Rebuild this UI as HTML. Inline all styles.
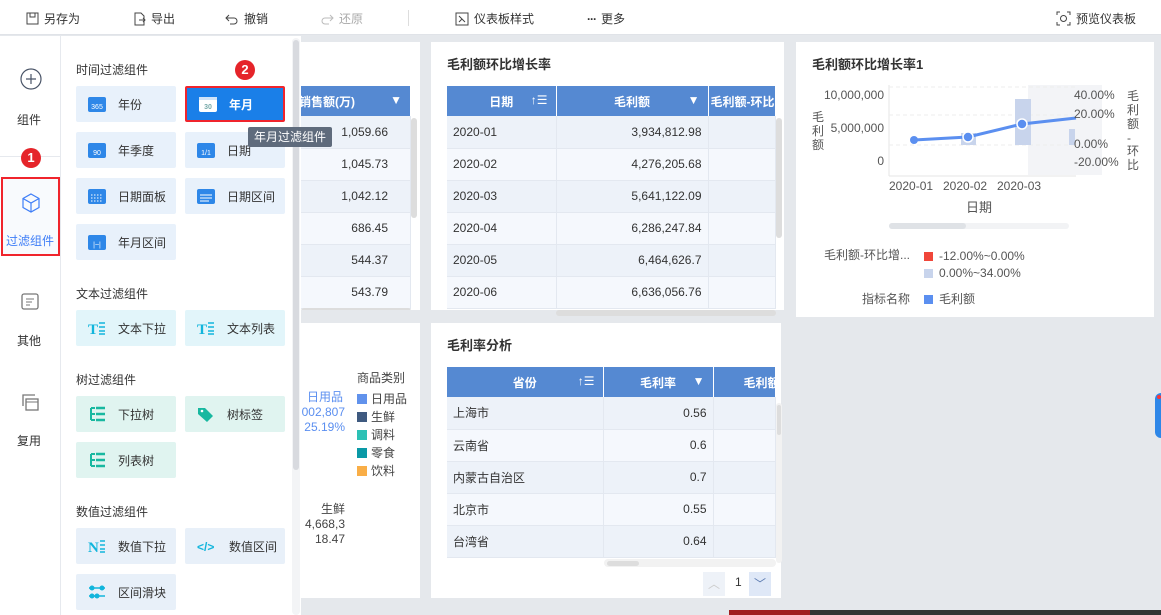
<!DOCTYPE html>
<html><head><meta charset="utf-8"><style>
*{margin:0;padding:0;box-sizing:border-box}
body{width:1161px;height:615px;overflow:hidden;background:#e5e8ec;font-family:"Liberation Sans","Noto Sans CJK SC",sans-serif;font-size:12px;color:#333;position:relative}
.abs{position:absolute}
.tb{left:0;top:0;width:1161px;height:35px;background:#fff;border-bottom:1px solid #e0e3e8}
.tb span{position:absolute;top:10px;font-size:12px;color:#333;display:flex;align-items:center;gap:5px}
.nav{left:0;top:36px;width:61px;height:579px;background:#fff;border-right:1px solid #e6e9ee}
.panel{left:61px;top:36px;width:240px;height:579px;background:#fff}
.sec{position:absolute;left:15px;font-size:12px;color:#333}
.btn{position:absolute;width:100px;height:36px;border-radius:2px;display:flex;align-items:center;padding-left:12px;gap:12px;font-size:12px;color:#333}
.bt{background:#e8f1fb}.bx{background:#e2f5fa}.br{background:#e0f4f0}.bn{background:#e8f0f9}
.card{background:#fff}
.ttl{position:absolute;left:16px;top:12px;font-size:13px;font-weight:bold;color:#333}
table{border-collapse:collapse;position:absolute;font-size:12px}
th{background:#5589d2;color:#fff;height:30px;font-weight:bold;border-right:1px solid #fff;position:relative}
td{height:32px;border-right:1px solid #e3e8f0;border-bottom:1px solid #e3e8f0;padding:0 6px}
tr:nth-child(even) td{background:#edf2f9}
tr:nth-child(odd) td{background:#f5f8fd}
.r{text-align:right}
.badge{position:absolute;width:20px;height:20px;border-radius:50%;background:#e5242a;color:#fff;font-weight:bold;font-size:13px;text-align:center;line-height:20px}
</style></head><body>

<div class="abs tb">
<span style="left:25px"><svg width="14" height="14"><rect x="2" y="1" width="11" height="11" fill="none" stroke="#444"/><rect x="5" y="1" width="5" height="4" fill="none" stroke="#444"/></svg>另存为</span>
<span style="left:132px"><svg width="14" height="14"><path d="M3 1h6l3 3v9H3z" fill="none" stroke="#444"/><path d="M7 8h6M11 6l2 2-2 2" fill="none" stroke="#444"/></svg>导出</span>
<span style="left:225px"><svg width="14" height="14"><path d="M4 3L1 6l3 3M1 6h8a3 3 0 010 6H5" fill="none" stroke="#444"/></svg>撤销</span>
<span style="left:320px;color:#aaa"><svg width="14" height="14"><path d="M10 3l3 3-3 3M13 6H5a3 3 0 000 6h4" fill="none" stroke="#bbb"/></svg>还原</span>
<div class="abs" style="left:408px;top:10px;width:1px;height:16px;background:#ddd"></div>
<span style="left:455px"><svg width="14" height="14"><rect x="1" y="1" width="12" height="12" fill="none" stroke="#444"/><path d="M4 4l6 6M4 10l3-3" stroke="#444"/></svg>仪表板样式</span>
<span style="left:587px"><b style="letter-spacing:-1px">···</b> 更多</span>
<span style="left:1056px"><svg width="15" height="15"><path d="M1 4V1h3M11 1h3v3M14 11v3h-3M4 14H1v-3" fill="none" stroke="#444"/><circle cx="7.5" cy="7.5" r="3" fill="none" stroke="#444"/></svg>预览仪表板</span>
</div>

<div class="abs nav">
<svg class="abs" style="left:20px;top:32px" width="22" height="22"><circle cx="11" cy="11" r="10" fill="none" stroke="#4a5568" stroke-width="1.2"/><path d="M11 6v10M6 11h10" stroke="#4a5568" stroke-width="1.2"/></svg>
<div class="abs" style="left:17px;top:75px;font-size:12px">组件</div>
<div class="abs" style="left:0;top:120px;width:60px;height:1px;background:#e6e9ee"></div>
<div class="abs" style="left:1px;top:141px;width:59px;height:79px;border:2px solid #f0242c;background:#f8fafd"></div>
<svg class="abs" style="left:20px;top:156px" width="22" height="22"><path d="M11 2l8 4.5v9L11 20l-8-4.5v-9z M3 6.5l8 4.5 8-4.5 M11 11v9" fill="none" stroke="#3f7ef7" stroke-width="1.2"/></svg>
<div class="abs" style="left:6px;top:196px;color:#3f7ef7">过滤组件</div>
<svg class="abs" style="left:20px;top:256px" width="20" height="20"><rect x="2" y="2" width="16" height="15" rx="2" fill="none" stroke="#777" stroke-width="1.3"/><path d="M6 7h8M6 10h6M6 13h4" stroke="#777"/></svg>
<div class="abs" style="left:17px;top:296px">其他</div>
<svg class="abs" style="left:20px;top:356px" width="20" height="20"><path d="M3 14V3h12" fill="none" stroke="#777" stroke-width="1.3"/><rect x="6" y="7" width="12" height="11" fill="none" stroke="#777" stroke-width="1.3"/><path d="M6 10h12" stroke="#777"/></svg>
<div class="abs" style="left:17px;top:396px">复用</div>
</div>

<div class="abs panel">
<div class="sec" style="top:25px">时间过滤组件</div>
<div class="btn bt" style="left:15px;top:50px"><svg width="18" height="18"><rect x="0" y="2" width="18" height="15" rx="2" fill="#2e87e8"/><text x="9" y="14" font-size="7" fill="#fff" text-anchor="middle" font-family="Liberation Sans">365</text></svg>年份</div>
<div class="btn" style="left:124px;top:50px;background:#1a7fe8;border:2px solid #f0242c;color:#fff;font-weight:bold"><svg width="18" height="18"><rect x="0" y="2" width="18" height="15" rx="2" fill="#fff"/><rect x="0" y="2" width="18" height="3" fill="#cfe3f9"/><text x="9" y="14" font-size="7" fill="#7aa" text-anchor="middle">30</text></svg>年月</div>
<div class="btn bt" style="left:15px;top:96px"><svg width="18" height="18"><rect x="0" y="2" width="18" height="15" rx="2" fill="#2e87e8"/><text x="9" y="14" font-size="7" fill="#fff" text-anchor="middle">90</text></svg>年季度</div>
<div class="btn bt" style="left:124px;top:96px"><svg width="18" height="18"><rect x="0" y="2" width="18" height="15" rx="2" fill="#2e87e8"/><text x="9" y="14" font-size="7" fill="#fff" text-anchor="middle">1/1</text></svg>日期</div>
<div class="btn bt" style="left:15px;top:142px"><svg width="18" height="18"><rect x="0" y="2" width="18" height="15" rx="2" fill="#2e87e8"/><path d="M3 8h12M3 11h12M3 14h12" stroke="#fff" stroke-dasharray="1.5 1.5"/></svg>日期面板</div>
<div class="btn bt" style="left:124px;top:142px"><svg width="18" height="18"><rect x="0" y="2" width="18" height="15" rx="2" fill="#2e87e8"/><path d="M3 8h12M3 11h12M3 14h9" stroke="#fff"/></svg>日期区间</div>
<div class="btn bt" style="left:15px;top:188px"><svg width="18" height="18"><rect x="0" y="2" width="18" height="15" rx="2" fill="#2e87e8"/><text x="9" y="14" font-size="7" fill="#fff" text-anchor="middle">|~|</text></svg>年月区间</div>
<div class="sec" style="top:249px">文本过滤组件</div>
<div class="btn bx" style="left:15px;top:274px"><svg width="18" height="18"><text x="0" y="15" font-size="15" font-weight="bold" fill="#12b5dc" font-family="Liberation Serif">T</text><path d="M11 4h6M11 8h6M11 12h6M11 15h6" stroke="#12b5dc" stroke-width="1.5"/></svg>文本下拉</div>
<div class="btn bx" style="left:124px;top:274px"><svg width="18" height="18"><text x="0" y="15" font-size="15" font-weight="bold" fill="#12b5dc" font-family="Liberation Serif">T</text><path d="M11 4h6M11 8h6M11 12h6M11 15h6" stroke="#12b5dc" stroke-width="1.5"/></svg>文本列表</div>
<div class="sec" style="top:335px">树过滤组件</div>
<div class="btn br" style="left:15px;top:360px"><svg width="18" height="18"><path d="M3 3v12M3 3h4M3 9h4M3 15h4" stroke="#18b8a0" stroke-width="2"/><path d="M8 3h9M8 9h9M8 15h9" stroke="#18b8a0" stroke-width="2.5"/></svg>下拉树</div>
<div class="btn br" style="left:124px;top:360px"><svg width="18" height="18"><path d="M1 3h7l8 8-6 6-9-8z" fill="#18b8a0"/><circle cx="5" cy="6" r="1.3" fill="#fff"/></svg>树标签</div>
<div class="btn br" style="left:15px;top:406px"><svg width="18" height="18"><path d="M3 3v12M3 3h4M3 9h4M3 15h4" stroke="#18b8a0" stroke-width="2"/><path d="M8 3h9M8 9h9M8 15h9" stroke="#18b8a0" stroke-width="2.5"/></svg>列表树</div>
<div class="sec" style="top:467px">数值过滤组件</div>
<div class="btn bn" style="left:15px;top:492px"><svg width="18" height="18"><text x="0" y="15" font-size="15" font-weight="bold" fill="#12b5dc" font-family="Liberation Serif">N</text><path d="M12 4h5M12 8h5M12 12h5M12 15h5" stroke="#12b5dc" stroke-width="1.5"/></svg>数值下拉</div>
<div class="btn bn" style="left:124px;top:492px"><svg width="20" height="18"><text x="0" y="14" font-size="12" font-weight="bold" fill="#12b5dc">&lt;/&gt;</text></svg>数值区间</div>
<div class="btn bn" style="left:15px;top:538px"><svg width="18" height="18"><path d="M1 5h16M1 13h16" stroke="#12b5dc" stroke-width="1.5"/><circle cx="4" cy="5" r="2.5" fill="#12b5dc"/><circle cx="14" cy="5" r="2.5" fill="#12b5dc"/><circle cx="4" cy="13" r="2.5" fill="#12b5dc"/><circle cx="9" cy="13" r="2.5" fill="#12b5dc"/></svg>区间滑块</div>
<div class="abs" style="left:231px;top:2px;width:8px;height:577px;background:#f3f4f6;border-radius:4px"></div>
<div class="abs" style="left:232px;top:4px;width:6px;height:430px;background:#d8dadf;border-radius:3px"></div>
</div>

<!-- left partial card -->
<div class="abs card" style="left:301px;top:42px;width:119px;height:268px;overflow:hidden">
<table style="left:-10px;top:44px;width:120px">
<tr><th style="text-align:left;padding-left:8px">销售额(万)<span style="position:absolute;right:8px">▼</span></th></tr>
<tr><td class="r" style="padding-right:22px">1,059.66</td></tr>
<tr><td class="r" style="padding-right:22px">1,045.73</td></tr>
<tr><td class="r" style="padding-right:22px">1,042.12</td></tr>
<tr><td class="r" style="padding-right:22px">686.45</td></tr>
<tr><td class="r" style="padding-right:22px">544.37</td></tr>
<tr><td class="r" style="padding-right:22px">543.79</td></tr>
</table>
<div class="abs" style="left:110px;top:76px;width:6px;height:100px;background:#ddd;border-radius:3px"></div>
<div class="abs" style="left:0;top:266px;width:110px;height:6px;background:#ddd;border-radius:3px"></div>
</div>
<div class="abs" style="left:410px;top:86px;width:1px;height:30px;background:#fff"></div>

<!-- card 2 -->
<div class="abs card" style="left:431px;top:42px;width:353px;height:268px">
<div class="ttl">毛利额环比增长率</div>
<table style="left:16px;top:44px;width:328px;table-layout:fixed">
<col style="width:109px"><col style="width:152px"><col style="width:67px">
<tr><th>日期<span style="position:absolute;right:8px;font-weight:normal">↑☰</span></th><th>毛利额<span style="position:absolute;right:8px">▼</span></th><th style="white-space:nowrap;overflow:hidden;text-align:left;padding-left:2px">毛利额-环比</th></tr>
<tr><td>2020-01</td><td class="r">3,934,812.98</td><td></td></tr>
<tr><td>2020-02</td><td class="r">4,276,205.68</td><td></td></tr>
<tr><td>2020-03</td><td class="r">5,641,122.09</td><td></td></tr>
<tr><td>2020-04</td><td class="r">6,286,247.84</td><td></td></tr>
<tr><td>2020-05</td><td class="r">6,464,626.7</td><td></td></tr>
<tr><td>2020-06</td><td class="r">6,636,056.76</td><td></td></tr>
</table>
<div class="abs" style="left:345px;top:76px;width:6px;height:120px;background:#ddd;border-radius:3px"></div>
<div class="abs" style="left:125px;top:268px;width:220px;height:6px;background:#ddd;border-radius:3px"></div>
</div>

<!-- card 3 -->
<div class="abs card" style="left:796px;top:42px;width:358px;height:275px">
<div class="ttl">毛利额环比增长率1</div>
<svg class="abs" style="left:0;top:0" width="358" height="275" font-family="Liberation Sans" font-size="12" fill="#555">
<rect x="232" y="43" width="74" height="90" fill="#f3f4f7"/>
<line x1="93" y1="43" x2="93" y2="134" stroke="#e6e6e6"/>
<line x1="93" y1="134" x2="280" y2="134" stroke="#e6e6e6"/>
<line x1="93" y1="45" x2="280" y2="45" stroke="#eee" stroke-dasharray="4 3"/>
<line x1="93" y1="73" x2="280" y2="73" stroke="#eee" stroke-dasharray="4 3"/>
<line x1="93" y1="103" x2="280" y2="103" stroke="#eee" stroke-dasharray="4 3"/>
<rect x="165" y="91" width="15" height="12" fill="#c8d4ec"/>
<rect x="219" y="57" width="16" height="46" fill="#c8d4ec"/>
<rect x="273" y="87" width="6" height="16" fill="#c8d4ec"/>
<polyline points="118,98 172,95 226,82 280,76" fill="none" stroke="#5b8ff0" stroke-width="3"/>
<circle cx="118" cy="98" r="4" fill="#5b8ff0"/>
<circle cx="172" cy="95" r="5" fill="#5b8ff0" stroke="#fff" stroke-width="1.5"/>
<circle cx="226" cy="82" r="5" fill="#5b8ff0" stroke="#fff" stroke-width="1.5"/>
<text x="88" y="57" text-anchor="end">10,000,000</text>
<text x="88" y="90" text-anchor="end">5,000,000</text>
<text x="88" y="123" text-anchor="end">0</text>
<text x="16" y="79">毛</text><text x="16" y="93">利</text><text x="16" y="107">额</text>
<text x="278" y="57">40.00%</text><text x="278" y="76">20.00%</text><text x="278" y="106">0.00%</text><text x="278" y="124">-20.00%</text>
<text x="331" y="58">毛</text><text x="331" y="72">利</text><text x="331" y="86">额</text><text x="331" y="100">-</text><text x="331" y="113">环</text><text x="331" y="127">比</text>
<text x="93" y="148">2020-01</text><text x="147" y="148">2020-02</text><text x="201" y="148">2020-03</text>
<text x="170" y="170" font-size="13">日期</text>
<rect x="93" y="181" width="180" height="6" rx="3" fill="#f2f3f5"/><rect x="93" y="181" width="77" height="6" rx="3" fill="#dfe2e6"/>
<text x="114" y="217" text-anchor="end">毛利额-环比增...</text>
<rect x="128" y="210" width="9" height="9" fill="#f0463a"/><text x="143" y="218">-12.00%~0.00%</text>
<rect x="128" y="227" width="9" height="9" fill="#c8d4ec"/><text x="143" y="235">0.00%~34.00%</text>
<text x="114" y="261" text-anchor="end">指标名称</text>
<rect x="128" y="253" width="9" height="9" fill="#5b8ff0"/><text x="143" y="261">毛利额</text>
</svg>
</div>

<!-- bottom-left partial card -->
<div class="abs card" style="left:301px;top:323px;width:119px;height:275px">
<svg class="abs" style="left:0;top:0" width="119" height="275" font-family="Liberation Sans,Noto Sans CJK SC" font-size="12">
<text x="42" y="78" fill="#5b8ff0" text-anchor="end">日用品</text>
<text x="44" y="93" fill="#5b8ff0" text-anchor="end">002,807</text>
<text x="44" y="108" fill="#5b8ff0" text-anchor="end">25.19%</text>
<text x="44" y="190" fill="#444" text-anchor="end">生鲜</text>
<text x="44" y="205" fill="#444" text-anchor="end">4,668,3</text>
<text x="44" y="220" fill="#444" text-anchor="end">18.47</text>
<text x="56" y="59" fill="#444">商品类别</text>
<rect x="56" y="71" width="10" height="10" fill="#6192ec"/><text x="70" y="80" fill="#444">日用品</text>
<rect x="56" y="89" width="10" height="10" fill="#3f5a80"/><text x="70" y="98" fill="#444">生鲜</text>
<rect x="56" y="107" width="10" height="10" fill="#2cc1b5"/><text x="70" y="116" fill="#444">调料</text>
<rect x="56" y="125" width="10" height="10" fill="#0a99a6"/><text x="70" y="134" fill="#444">零食</text>
<rect x="56" y="143" width="10" height="10" fill="#f9ae47"/><text x="70" y="152" fill="#444">饮料</text>
</svg>
</div>

<!-- card 5 -->
<div class="abs card" style="left:431px;top:323px;width:350px;height:275px">
<div class="ttl">毛利率分析</div>
<table style="left:16px;top:44px;width:328px;table-layout:fixed">
<col style="width:156px"><col style="width:110px"><col style="width:62px">
<tr><th>省份<span style="position:absolute;right:8px;font-weight:normal">↑☰</span></th><th>毛利率<span style="position:absolute;right:8px">▼</span></th><th style="white-space:nowrap;overflow:hidden;text-align:left;padding-left:30px">毛利额</th></tr>
<tr><td>上海市</td><td class="r">0.56</td><td></td></tr>
<tr><td>云南省</td><td class="r">0.6</td><td></td></tr>
<tr><td>内蒙古自治区</td><td class="r">0.7</td><td></td></tr>
<tr><td>北京市</td><td class="r">0.55</td><td></td></tr>
<tr><td>台湾省</td><td class="r">0.64</td><td></td></tr>
</table>
<div class="abs" style="left:345px;top:80px;width:6px;height:160px;background:#f2f2f2;border-radius:3px"></div>
<div class="abs" style="left:346px;top:82px;width:4px;height:30px;background:#ddd;border-radius:2px"></div>
<div class="abs" style="left:173px;top:236px;width:172px;height:8px;background:#f2f2f2;border-radius:4px"></div>
<div class="abs" style="left:176px;top:238px;width:32px;height:5px;background:#ddd;border-radius:3px"></div>
<div class="abs" style="left:272px;top:249px;width:22px;height:24px;background:#eef2f8;color:#ccc;text-align:center;line-height:24px">︿</div>
<div class="abs" style="left:304px;top:252px;color:#333">1</div>
<div class="abs" style="left:318px;top:249px;width:22px;height:24px;background:#dfe8f7;color:#5b7ab0;text-align:center;line-height:24px">﹀</div>
</div>

<div class="abs" style="left:1155px;top:393px;width:6px;height:45px;background:#2e87e8;border-radius:6px 0 0 6px"></div>
<div class="abs" style="left:1157px;top:395px;width:4px;height:4px;background:#f33;border-radius:50%"></div>
<div class="abs" style="left:729px;top:610px;width:81px;height:5px;background:#a02020"></div>
<div class="abs" style="left:810px;top:610px;width:351px;height:5px;background:#333"></div>

<div class="badge" style="left:21px;top:148px">1</div>
<div class="badge" style="left:235px;top:60px">2</div>
<div class="abs" style="left:248px;top:127px;width:84px;height:20px;background:#5f6b7c;color:#fff;font-size:12px;line-height:20px;text-align:center;border-radius:2px;white-space:nowrap">年月过滤组件</div>
</body></html>
